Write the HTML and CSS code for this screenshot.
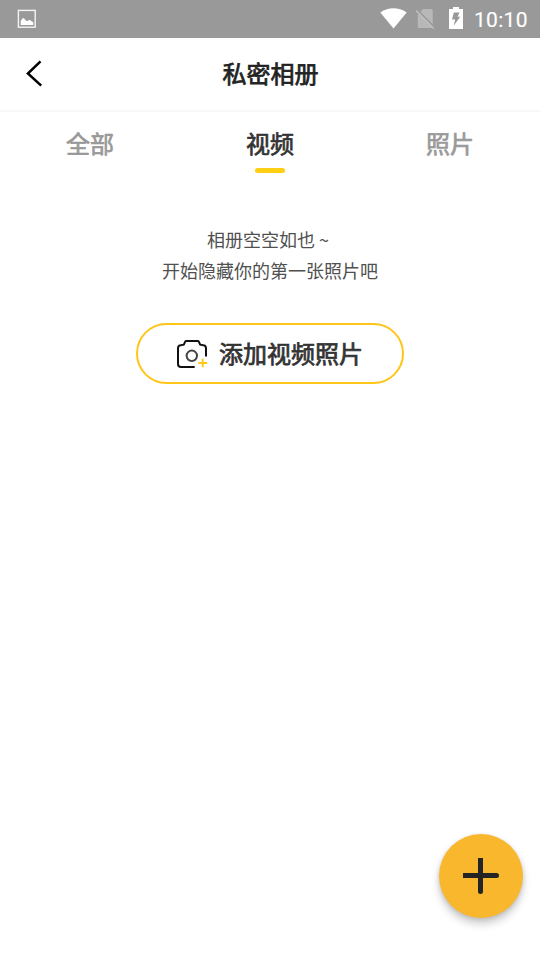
FILE: index.html
```html
<!DOCTYPE html>
<html lang="zh-CN">
<head>
<meta charset="utf-8">
<title>私密相册</title>
<link rel="stylesheet" href="styles.css">
</head>
<body>
<div class="status">
  <svg class="status-photo" width="20" height="20" viewBox="0 0 20 20"><rect x="1.4" y="1.4" width="16.8" height="16.8" fill="none" stroke="#f4f4f4" stroke-width="1.4"/><path d="M3.7 16V12q1.3-1.5 2-2.7l1-.2 2.4 2.6 1.2.4 2-1 1.5.5 1 1 1.5.4V16z" fill="#fff"/></svg>
  <svg class="wifi" width="27" height="21" viewBox="0 0 27 21"><path d="M0.3 4.5Q13.5-3.8 26.7 4.5L13.5 20.6z" fill="#fff"/></svg>
  <svg class="sim" width="20" height="22" viewBox="0 0 20 22"><path d="M2.8 7.3V20h14.9V2.5a1.5 1.5 0 0 0-1.5-1.5H8.1L4.7 4.6z" fill="#b8b8b8"/><path d="M1.9 1.6L19.6 19.8" stroke="#999" stroke-width="2"/><path d="M1 2.4L18.9 20.8" stroke="#c0c0c0" stroke-width="1.4"/></svg>
  <svg class="battery" width="14" height="22" viewBox="0 0 14 22"><path d="M4 0h6v2h4v20H0V2h4z" fill="#fff"/><path d="M4.8 5.5h5.7L8.6 9.8h2.7L4.8 18.6l1.3-6H3z" fill="#999"/></svg>
  <span class="time">10:10</span>
</div>
<header class="header">
  <svg class="back" width="20" height="30" viewBox="0 0 20 30"><path d="M15.5 3.3L2.9 15.5 16.2 27.7" fill="none" stroke="#000" stroke-width="2.5"/></svg>
  <h1 class="title">私密相册</h1>
</header>
<nav class="tabs">
  <div class="tab">全部</div>
  <div class="tab active">视频</div>
  <div class="tab">照片</div>
</nav>
<main class="empty">
  <p class="message"><span class="first">相册空空如也 ~</span><br>开始隐藏你的第一张照片吧</p>
  <button class="add">
    <svg width="32" height="30" viewBox="0 0 32 30" fill="none"><path d="M18.7 28H5Q2 28 2 25V9.3Q2 6.4 4.6 6.2L7.8 5.7L9.2 2.6Q9.5 2 10.3 2H21.7Q22.5 2 22.8 2.6L24.2 5.7L27.4 6.2Q30 6.4 30 9.3V17.5" stroke="#111" stroke-width="2"/><circle cx="15.8" cy="16.8" r="5.2" stroke="#444" stroke-width="2"/><path d="M22.3 24h8.9M26.7 19.8v8.4" stroke="#ffc91a" stroke-width="2"/></svg>
    <span>添加视频照片</span>
  </button>
</main>
<button class="fab" aria-label="添加">
  <svg width="36" height="36" viewBox="0 0 36 36"><path d="M0 15h15V0h5v15h13.5a2.5 2.5 0 0 1 0 5H20v13.5a2.5 2.5 0 0 1-5 0V20H0z" fill="#242424"/></svg>
</button>
</body>
</html>
```
FILE: styles.css
```css
* { box-sizing: border-box; }
body {
  margin: 0;
  width: 540px;
  height: 960px;
  overflow: hidden;
  background: #fff;
  color: #333;
  font-family: "Noto Sans CJK SC", sans-serif;
}
button { font-family: inherit; padding: 0; }
.status {
  height: 38px;
  display: flex;
  align-items: flex-start;
  padding: 0 12px 0 17px;
  background: #999;
}
.status svg { flex: none; }
.status-photo { margin-top: 9px; margin-right: auto; }
.wifi { margin-top: 8px; }
.sim { margin: 8px 0 0 8px; }
.battery { margin: 7px 0 0 14px; }
.time {
  margin-left: 11px;
  width: 54px;
  color: #fff;
  font: 400 21px/40px Roboto, sans-serif;
  letter-spacing: .3px;
  -webkit-text-stroke: .15px #fff;
  white-space: nowrap;
}
.header {
  height: 74px;
  display: grid;
  grid-template-columns: 60px 1fr 60px;
  border-bottom: 2px solid #f7f7f7;
}
.back { margin: 20px 0 0 25px; }
.title {
  margin: 0;
  padding-left: 1px;
  font-size: 24px;
  line-height: 70px;
  font-weight: 400;
  -webkit-text-stroke: .75px currentColor;
  text-align: center;
  color: #222;
}
.tabs {
  height: 62px;
  display: grid;
  grid-template-columns: repeat(3, 1fr);
}
.tab {
  display: flex;
  flex-direction: column;
  align-items: center;
  font-size: 24px;
  line-height: 56px;
  height: 62px;
  padding-top: 3px;
  font-weight: 400;
  -webkit-text-stroke: .7px currentColor;
  color: #999;
}
.tab.active { color: #333; }
.tab.active::after {
  content: "";
  width: 30px;
  height: 5px;
  margin-top: -3px;
  border-radius: 3px;
  background: #ffcf14;
}
.empty {
  display: flex;
  flex-direction: column;
  align-items: center;
  padding-top: 50px;
}
.message {
  margin: 0;
  font-size: 18px;
  line-height: 31px;
  text-align: center;
  color: #505050;
}
.first { margin-right: 4px; }
.add {
  width: 268px;
  height: 61px;
  margin-top: 37px;
  display: flex;
  align-items: center;
  padding-left: 38px;
  gap: 11px;
  border: 2px solid #ffc518;
  border-radius: 31px;
  background: #fff;
  color: #333;
  font-size: 24px;
  line-height: 56px;
  font-weight: 400;
  -webkit-text-stroke: .75px currentColor;
}
.add span { padding-bottom: 2px; }
.fab {
  position: absolute;
  left: 439px;
  top: 834px;
  width: 84px;
  height: 84px;
  display: flex;
  align-items: center;
  justify-content: center;
  border: 0;
  border-radius: 50%;
  background: #f9b72e;
  box-shadow: 0 6px 8px rgba(0, 0, 0, .2), 0 1px 4px rgba(0, 0, 0, .12);
}
```
